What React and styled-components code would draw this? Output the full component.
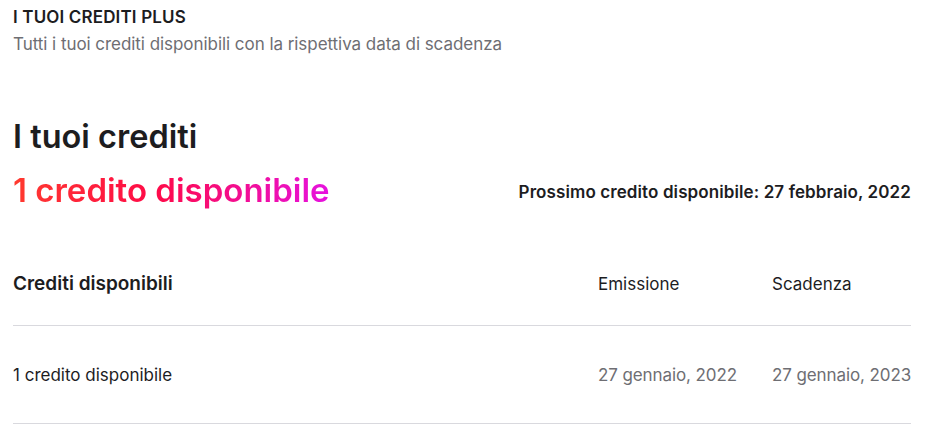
import React from "react";
import styled, { createGlobalStyle } from "styled-components";

const GlobalStyle = createGlobalStyle`
	body {
		margin: 0;
		background: #fff;
		font-family: Inter, "Liberation Sans", sans-serif;
		color: #1d1d1f;
		-webkit-font-smoothing: antialiased;
	}
`;

const Page = styled.div`
	padding: 7px 21px 0 13px;
`;

const Intro = styled.header`
	display: flex;
	flex-direction: column;
	gap: 7px;
`;

const Eyebrow = styled.h2`
	margin: 0;
	font-size: 17px;
	line-height: 20px;
	font-weight: 600;
	letter-spacing: 0.15px;
`;

const Lead = styled.p`
	margin: 0;
	font-size: 17px;
	line-height: 20px;
	color: #6e6e73;
	letter-spacing: -0.05px;
`;

const Summary = styled.section`
	margin-top: 63px;
`;

const Heading = styled.h1`
	margin: 0;
	font-size: 32.5px;
	line-height: 40px;
	font-weight: 600;
`;

const SummaryRow = styled.div`
	display: flex;
	align-items: center;
	justify-content: space-between;
	margin-top: 13px;
`;

const Available = styled.span`
	font-size: 33px;
	line-height: 40px;
	font-weight: 600;
	background: linear-gradient(90deg, #ff3a2e 0%, #ff0a48 45%, #e612e0 100%);
	-webkit-background-clip: text;
	background-clip: text;
	color: transparent;
`;

const Next = styled.span`
	font-size: 17px;
	font-weight: 600;
	letter-spacing: 0.1px;
	padding-top: 4px;
`;

const Row = styled.div`
	display: grid;
	grid-template-columns: 1fr 174px 139px;
	align-items: center;
	line-height: 24px;
	padding: ${(p) => (p.$head ? "62px 0 29px" : "37px 0 36px")};
	border-bottom: 1px solid #d9d9de;
`;

const Cell = styled.span`
	font-size: ${(p) => (p.$strong ? "19px" : "17px")};
	font-weight: ${(p) => (p.$strong ? 600 : 400)};
	color: ${(p) => (p.$muted ? "#6e6e73" : "#1d1d1f")};
	letter-spacing: ${(p) => (p.$muted ? "-0.1px" : "0")};
	white-space: nowrap;
`;

const credits = [
	{ label: "1 credito disponibile", issued: "27 gennaio, 2022", expires: "27 gennaio, 2023" },
];

export default function App() {
	return (
		<>
			<GlobalStyle />
			<Page>
				<Intro>
					<Eyebrow>I TUOI CREDITI PLUS</Eyebrow>
					<Lead>Tutti i tuoi crediti disponibili con la rispettiva data di scadenza</Lead>
				</Intro>
				<Summary>
					<Heading>I tuoi crediti</Heading>
					<SummaryRow>
						<Available>1 credito disponibile</Available>
						<Next>Prossimo credito disponibile: 27 febbraio, 2022</Next>
					</SummaryRow>
				</Summary>
				<div>
					<Row $head>
						<Cell $strong>Crediti disponibili</Cell>
						<Cell>Emissione</Cell>
						<Cell>Scadenza</Cell>
					</Row>
					{credits.map((c) => (
						<Row key={c.label}>
							<Cell>{c.label}</Cell>
							<Cell $muted>{c.issued}</Cell>
							<Cell $muted>{c.expires}</Cell>
						</Row>
					))}
				</div>
			</Page>
		</>
	);
}
